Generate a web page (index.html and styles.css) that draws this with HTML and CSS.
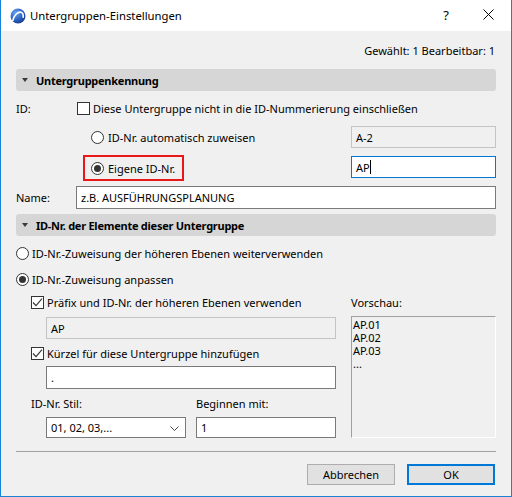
FILE: index.html
```html
<!DOCTYPE html>
<html lang="de">
<head>
<meta charset="utf-8">
<title>Untergruppen-Einstellungen</title>
<link rel="stylesheet" href="styles.css">
</head>
<body>
<div class="window">
  <div class="titlebar">
    <svg class="appicon" width="16" height="16" viewBox="0 0 16 16">
      <defs>
        <radialGradient id="g" cx="0.35" cy="0.3" r="0.8">
          <stop offset="0" stop-color="#6aa6ef"/>
          <stop offset="0.6" stop-color="#2a5fc0"/>
          <stop offset="1" stop-color="#16357f"/>
        </radialGradient>
      </defs>
      <circle cx="8" cy="8" r="7.5" fill="url(#g)"/>
      <path d="M2.8 12.6 C4.2 6.8 8 3.6 11 4.2 C12.6 4.6 13.4 6.4 13.2 9.2" fill="none" stroke="#ffffff" stroke-width="1.6" stroke-linecap="round"/>
    </svg>
    <span class="title">Untergruppen-Einstellungen</span>
    <span class="help">?</span>
    <svg class="close" width="11" height="11" viewBox="0 0 11 11">
      <path d="M0.5 0.5 L10.5 10.5 M10.5 0.5 L0.5 10.5" stroke="#000" stroke-width="1"/>
    </svg>
  </div>

  <div class="content">
    <div class="status">Gewählt: 1 Bearbeitbar: 1</div>

    <div class="section"><span class="tri"></span>Untergruppenkennung</div>

    <div class="row id-row">
      <span class="lbl">ID:</span>
      <span class="check"></span>
      <span class="txt">Diese Untergruppe nicht in die ID-Nummerierung einschließen</span>
    </div>

    <div class="row opt-row">
      <div class="opt"><span class="radio"></span><span>ID-Nr. automatisch zuweisen</span></div>
      <div class="field disabled side">A-2</div>
    </div>

    <div class="row opt-row opt-row2">
      <div class="opt focus"><span class="radio on"></span><span>Eigene ID-Nr.</span></div>
      <div class="field active side">AP<span class="caret"></span></div>
    </div>

    <div class="row name-row">
      <span class="lbl">Name:</span>
      <div class="field name">z.B. AUSFÜHRUNGSPLANUNG</div>
    </div>

    <div class="section"><span class="tri"></span>ID-Nr. der Elemente dieser Untergruppe</div>

    <div class="row radio-row first"><span class="radio"></span><span>ID-Nr.-Zuweisung der höheren Ebenen weiterverwenden</span></div>
    <div class="row radio-row"><span class="radio on"></span><span>ID-Nr.-Zuweisung anpassen</span></div>

    <div class="lower">
      <div class="left">
        <div class="row chk-row"><span class="check on"><svg width="11" height="11" viewBox="0 0 11 11"><path d="M1 5.5 L4 8.6 L10 1.6" fill="none" stroke="#333" stroke-width="1.1"/></svg></span><span>Präfix und ID-Nr. der höheren Ebenen verwenden</span></div>
        <div class="field disabled indent f1">AP</div>
        <div class="row chk-row c2"><span class="check on"><svg width="11" height="11" viewBox="0 0 11 11"><path d="M1 5.5 L4 8.6 L10 1.6" fill="none" stroke="#333" stroke-width="1.1"/></svg></span><span>Kürzel für diese Untergruppe hinzufügen</span></div>
        <div class="field indent f2">.</div>
        <div class="pair-labels">
          <span class="pl1">ID-Nr. Stil:</span>
          <span class="pl2">Beginnen mit:</span>
        </div>
        <div class="pair">
          <div class="field select">01, 02, 03,...<svg class="chev" width="9" height="5" viewBox="0 0 9 5"><path d="M0.5 0.5 L4.5 4.5 L8.5 0.5" fill="none" stroke="#444" stroke-width="1"/></svg></div>
          <div class="field start">1</div>
        </div>
      </div>
      <div class="right">
        <div class="plabel">Vorschau:</div>
        <div class="preview">
          <div class="pline">AP.01</div>
          <div class="pline">AP.02</div>
          <div class="pline">AP.03</div>
          <div class="pline">...</div>
        </div>
      </div>
    </div>

    <div class="sep"></div>

    <div class="buttons">
      <button class="btn">Abbrechen</button>
      <button class="btn default">OK</button>
    </div>
  </div>
</div>
</body>
</html>
```

FILE: styles.css
```css
* { box-sizing: border-box; }
html, body { margin: 0; padding: 0; }
body {
  width: 512px;
  height: 497px;
  overflow: hidden;
  font-family: "Noto Sans", "DejaVu Sans", sans-serif;
  font-size: 11px;
  color: #000;
  background: #f0f0f0;
  white-space: nowrap;
}
.window {
  width: 512px;
  height: 497px;
  background: #f0f0f0;
  border-left: 1px solid #1883d7;
  border-right: 1px solid #1883d7;
  border-bottom: 1px solid #1883d7;
  display: flex;
  flex-direction: column;
}
.titlebar {
  height: 31px;
  background: #fff;
  display: flex;
  align-items: center;
  flex: none;
}
.appicon { margin-left: 9px; margin-top: 1px; flex: none; }
.title { margin-left: 4px; font-size: 11.3px; flex: 1; }
.help { font-size: 13px; margin-right: 34px; margin-top: -1px; }
.close { margin-right: 17px; margin-top: -2px; }

.content {
  padding: 0 15px;
  display: flex;
  flex-direction: column;
  flex: 1;
}
.status {
  height: 38px;
  display: flex;
  align-items: center;
  justify-content: flex-end;
  padding-right: 1px;
}
.section {
  height: 22px;
  background: #d6d6d6;
  border-radius: 3px;
  display: flex;
  align-items: center;
  font-weight: bold;
  letter-spacing: -0.25px;
  padding-left: 20px;
  position: relative;
}
.tri {
  position: absolute;
  left: 6px;
  top: 9px;
  width: 0;
  height: 0;
  border-left: 3.5px solid transparent;
  border-right: 3.5px solid transparent;
  border-top: 4px solid #3a3a3a;
}
.row { display: flex; align-items: center; }
.lbl { width: 60px; flex: none; }
.id-row { height: 22px; margin-top: 6px; }
.id-row .check { margin-left: 1px; margin-right: 3px; }

.check {
  width: 13px;
  height: 13px;
  border: 1px solid #333;
  background: #fff;
  flex: none;
  display: flex;
  align-items: center;
  justify-content: center;
}
.radio {
  width: 13px;
  height: 13px;
  border: 1px solid #333;
  border-radius: 50%;
  background: #fff;
  flex: none;
  display: flex;
  align-items: center;
  justify-content: center;
}
.radio.on::after {
  content: "";
  width: 7px;
  height: 7px;
  border-radius: 50%;
  background: #333;
}

.opt-row { height: 22px; margin-top: 7px; justify-content: space-between; }
.opt {
  margin-left: 67px;
  height: 26px;
  border: 2px solid transparent;
  display: flex;
  align-items: center;
  padding-left: 6px;
  gap: 4px;
  flex: none;
}
.opt.focus { border-color: #e81818; width: 101px; }
.opt-row2 { height: 26px; margin-top: 7px; align-items: flex-start; }
.opt-row2 .field { margin-top: 1px; }

.field {
  height: 22px;
  border: 1px solid #7a7a7a;
  background: #fff;
  display: flex;
  align-items: center;
  padding-left: 4px;
  flex: none;
}
.field.disabled { border-color: #c4c4c4; background: #f0f0f0; }
.field.active { border-color: #0078d7; }
.side { width: 145px; }
.caret { width: 1px; height: 14px; background: #000; }

.name-row { height: 23px; margin-top: 5px; }
.field.name { width: 420px; height: 23px; }

.name-row + .section { margin-top: 5px; }

.radio-row { height: 26px; gap: 3px; }
.radio-row.first { margin-top: 4px; }

.lower {
  display: grid;
  grid-template-columns: 320px 145px;
  column-gap: 15px;
}
.left { display: flex; flex-direction: column; }
.chk-row { height: 20px; padding-left: 15px; gap: 3px; }
.chk-row.c2 { margin-top: 4px; }
.indent { margin-left: 30px; width: 290px; }
.f1 { margin-top: 5px; }
.f2 { margin-top: 3px; height: 23px; }
.pair-labels { height: 20px; margin-top: 4px; display: flex; align-items: center; padding-left: 15px; }
.pl1 { width: 165px; }
.pair { display: flex; margin-top: 4px; margin-left: 30px; gap: 10px; }
.select { width: 140px; height: 21px; justify-content: space-between; padding-right: 6px; }
.start { width: 140px; height: 21px; }
.chev { margin-top: 1px; }

.right { display: flex; flex-direction: column; }
.plabel { height: 20px; display: flex; align-items: center; }
.preview {
  margin-top: 4px;
  height: 122px;
  border-top: 1px solid #a0a0a0;
  border-left: 1px solid #a0a0a0;
  border-right: 1px solid #fff;
  border-bottom: 1px solid #fff;
  background: #f0f0f0;
  padding: 1px 0 0 1px;
}
.pline { height: 13px; line-height: 13px; }

.sep { height: 1px; background: #a0a0a0; margin-top: 13px; }

.buttons { display: flex; justify-content: flex-end; gap: 12px; margin-top: 12px; padding-right: 1px; }
.btn {
  width: 88px;
  height: 21px;
  font-family: inherit;
  font-size: 11px;
  background: #e1e1e1;
  border: 1px solid #adadad;
  color: #000;
  padding: 0;
  margin: 0;
}
.btn.default { border: 2px solid #0078d7; }
```
